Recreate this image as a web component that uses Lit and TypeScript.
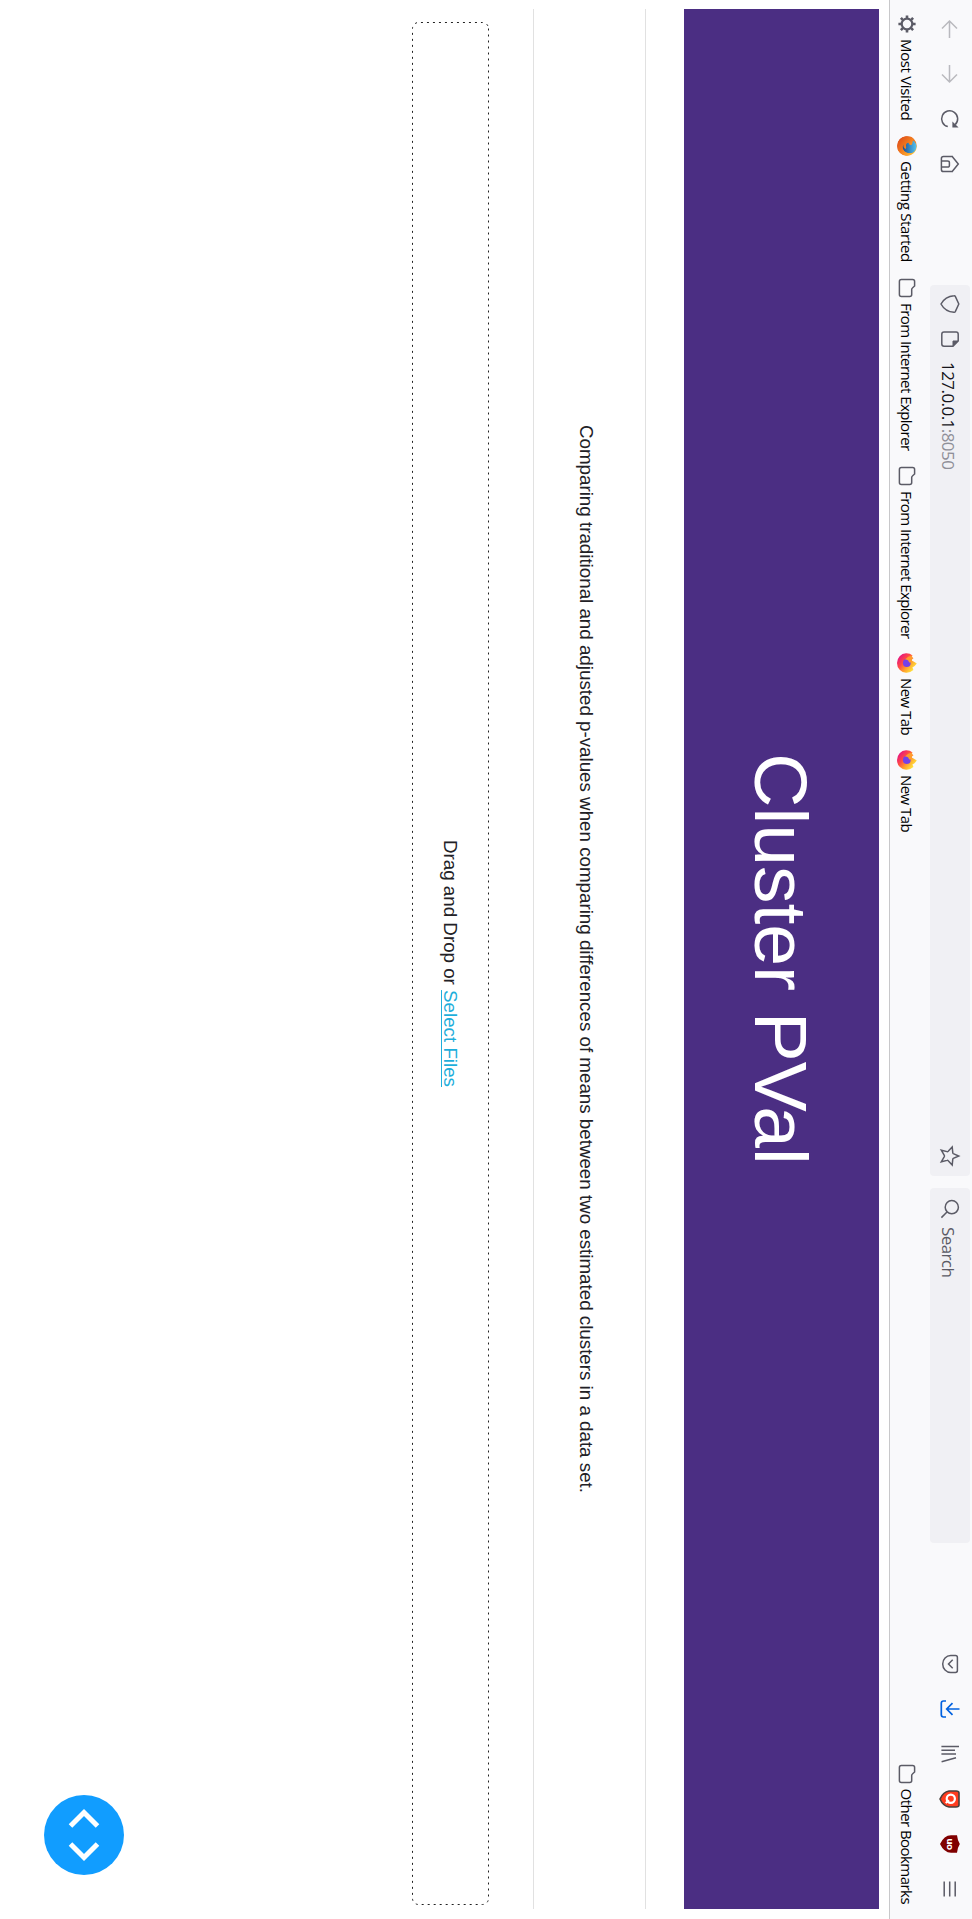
import { LitElement, html, css, svg } from "lit";
import { customElement } from "lit/decorators.js";

const icon = (w: number, h: number, body: unknown, cls = "") =>
  html`<svg class="icon ${cls}" width=${w} height=${h} viewBox="0 0 ${w} ${h}">${body}</svg>`;

const back = icon(20, 20, svg`<path d="M19 10.5H2M9.5 3L2 10.5L9.5 18"/>`, "dim");
const forward = icon(20, 20, svg`<path d="M1 10.5H18M10.5 3L18 10.5L10.5 18"/>`, "dim");
const reload = icon(20, 20, svg`<path d="M17.6 12.2A8 8 0 1 1 15.6 4.8"/><path class="solid" stroke="none" d="M18.6 1.4V7.6H12.4Z"/>`);
const home = icon(20, 20, svg`<path d="M2 8.2L10 1.7L18 8.2M2.4 8V16.5Q2.4 18.6 4.5 18.6H15.5Q17.6 18.6 17.6 16.5V8"/><path d="M7 18.5V12.5Q7 10.6 8.6 10.6H11.4Q13 10.6 13 12.5V18.5"/>`);
const shield = icon(20, 20, svg`<path d="M10 1.2L17.6 4.7Q18.4 5.1 18.3 6Q17.8 14.8 10 19Q2.2 14.8 1.7 6Q1.6 5.1 2.4 4.7Z"/>`);
const page = icon(18, 20, svg`<path d="M4.2 1.8H11L16.2 7V16Q16.2 18.2 14 18.2H4.2Q2 18.2 2 16V3.9Q2 1.8 4.2 1.8Z"/><path class="solid" stroke-width="1" d="M11 2V7H16Z"/>`);
const star = icon(22, 20, svg`<path d="M11 1.3L13.4 6.7Q13.6 7.1 14.2 7.2L20 7.8L15.7 11.8Q15.2 12.3 15.4 12.9L16.8 18.7L11.6 15.7Q11 15.4 10.4 15.7L5.2 18.7L6.6 12.9Q6.8 12.3 6.3 11.8L2 7.8L7.8 7.2Q8.4 7.1 8.6 6.7Z"/>`);
const magnifier = icon(20, 20, svg`<circle cx="8.2" cy="8.2" r="6.6"/><path d="M13 13L18.6 18.6"/>`);
const pocket = icon(20, 20, svg`<path d="M3.5 2.6H16.5Q18.4 2.6 18.4 4.5V9.3A8.4 8 0 0 1 1.6 9.3V4.5Q1.6 2.6 3.5 2.6Z"/><path d="M5.8 7.3L10 11.5L14.2 7.3"/>`);
const download = icon(20, 20, svg`<path d="M10 0.5V13M4.2 7.5L10 13.3L15.8 7.5M2 14V16.5Q2 18.7 4.2 18.7H15.8Q18 18.7 18 16.5V14"/>`, "blue");
const library = icon(20, 20, svg`<path d="M2.5 1V18.6M6.3 5V18.6M10.1 4V18.6M13.8 4L17.7 18.4"/>`);
const redShield = icon(20, 22, svg`<path d="M4 2H16Q18 2 18 5V12Q17 18 10 21Q3 18 2 12V5Q2 2 4 2Z" fill="#ff3d1f" stroke="#4a403c" stroke-width="1.6"/><circle cx="9.8" cy="10.2" r="4.1" stroke="#fff" stroke-width="2.2"/><path d="M11.2 12L14 15.3" stroke="#fff" stroke-width="2"/>`);
const darkShield = icon(20, 22, svg`<path d="M10 1.2Q13.5 3.4 18.8 4V10Q18.6 17 10 21Q1.4 17 1.2 10V4Q6.5 3.4 10 1.2Z" fill="#800000" stroke="none"/><text class="badge" x="10" y="14">uo</text>`);
const menu = icon(18, 20, svg`<path d="M1.5 4.8H16.5M1.5 10.3H16.5M1.5 15.8H16.5"/>`);

const gear = icon(20, 20, svg`<circle cx="10" cy="10" r="5.3" stroke-width="2.2"/><path stroke-width="2.6" d="M10 1.4V4M10 16V18.6M1.4 10H4M16 10H18.6M3.9 3.9L5.8 5.8M14.2 14.2L16.1 16.1M3.9 16.1L5.8 14.2M14.2 5.8L16.1 3.9"/>`);
const folder = icon(20, 20, svg`<path d="M3.4 2.4H8L10 4.6Q10.6 5.3 11.6 5.3H16.4Q18.4 5.3 18.4 7.3V15.6Q18.4 17.6 16.4 17.6H3.4Q1.4 17.6 1.4 15.6V4.4Q1.4 2.4 3.4 2.4Z"/>`);
const oldFox = icon(20, 20, svg`
  <defs><radialGradient id="o" cx=".75" cy=".2" r="1"><stop offset="0" stop-color="#ffcf3a"/><stop offset=".45" stop-color="#f58220"/><stop offset="1" stop-color="#cf3a16"/></radialGradient>
  <linearGradient id="b" x1="0" y1="0" x2="0" y2="1"><stop offset="0" stop-color="#55c3ee"/><stop offset="1" stop-color="#174a94"/></linearGradient>
  <linearGradient id="f" x1="1" y1="0" x2="0" y2="1"><stop offset="0" stop-color="#ffc83a"/><stop offset=".5" stop-color="#f27a1e"/><stop offset="1" stop-color="#d9431a"/></linearGradient></defs>
  <circle cx="10" cy="10" r="9.8" fill="url(#o)" stroke="none"/>
  <circle cx="10.5" cy="7.6" r="7" fill="url(#b)" stroke="none"/>
  <path d="M.8 6Q2 3.5 3.4 3.2Q5 4.6 7.2 4.6Q9.8 5.2 8.8 7.3L6.8 8.6Q7.2 11.2 10 11Q12 10.4 13 11.4Q11.6 14 8.4 13.6Q13.8 16.4 16.8 10Q17.8 7 17 4.2Q20 7 19.7 11Q18 19.6 10 19.8Q1.2 19.2 .3 11Z" fill="url(#f)" stroke="none"/>`);
const newFox = icon(20, 20, svg`
  <defs><linearGradient id="n" x1=".85" y1=".1" x2=".2" y2=".9"><stop offset="0" stop-color="#fff044"/><stop offset=".38" stop-color="#ffa22a"/><stop offset=".68" stop-color="#ff4a45"/><stop offset="1" stop-color="#e8187c"/></linearGradient></defs>
  <path d="M10.6.2Q13.4 2 14.4 4.6Q17.2 3.4 17 3.6Q20 7 19.7 11A9.7 9 0 0 1 .3 11Q.2 7 2.6 4.4L3.4 5.6L5.2 3.5Q5.8 5.3 7.6 5.3Q9 2.3 10.6.2Z" fill="url(#n)" stroke="none"/>
  <circle cx="10" cy="10.2" r="3.9" fill="#7540e8" stroke="none"/>
  <path d="M2.6 5Q8 4.2 9.8 6.6Q10 8 7.6 8.8Q6.2 10 6.4 12Q3.4 9 2.6 5Z" fill="#ff9a2d" stroke="none"/>`);

const navLeft = [back, forward, reload, home];
const navRight = [pocket, download, library, redShield, darkShield, menu];

const bookmarks = [
  { i: gear, w: 122, t: "Most Visited" },
  { i: oldFox, w: 142, t: "Getting Started" },
  { i: folder, w: 188, t: "From Internet Explorer" },
  { i: folder, w: 187, t: "From Internet Explorer" },
  { i: newFox, w: 97, t: "New Tab" },
  { i: newFox, w: 97, t: "New Tab" },
];

@customElement("app-root")
export class AppRoot extends LitElement {
  static styles = css`
    :host { display: block; width: 972px; height: 1919px; overflow: hidden; background: #fff; }
    .stage {
      width: 1919px; height: 972px; display: flex; flex-direction: column;
      transform-origin: 0 0; transform: translateX(972px) rotate(90deg);
      font-family: "Open Sans", "Noto Sans", sans-serif; color: #15141a; background: #fff;
      position: relative;
    }
    .icon { fill: none; stroke: #5b5b66; stroke-width: 1.5; flex: none; display: block; overflow: visible; }
    .icon .solid { fill: #5b5b66; }
    .icon.dim { stroke: #b9b9be; }
    .icon.blue { stroke: #0061e0; stroke-width: 1.7; }
    .badge { font: bold 9px "DejaVu Sans", sans-serif; fill: #fff; stroke: none; text-anchor: middle; letter-spacing: -0.6px; }
    .chrome { background: #f9f9fb; border-bottom: 1px solid #c8c8ca; height: 82px; flex: none; }
    .nav { height: 40px; padding-top: 2px; display: flex; align-items: center; }
    .slot { display: flex; justify-content: center; flex: none; width: 45px; }
    .left { display: flex; width: 279px; padding: 0 0 1px 6px; flex: none; }
    .field { background: #f0f0f4; border-radius: 4px; height: 40px; display: flex; align-items: center; box-sizing: border-box; flex: none; }
    .url { width: 891px; padding: 0 9px; }
    .url .page { margin-left: 16px; }
    .address { margin-left: 14px; padding-top: 4px; font-size: 17px; letter-spacing: -0.55px; line-height: 36px; flex: 1; white-space: nowrap; }
    .port { color: #8f8f98; }
    .search { width: 355px; margin-left: 12px; padding-left: 11px; font-size: 17px; letter-spacing: -0.6px; color: #5b5b66; }
    .search span { margin-left: 8px; padding-top: 4px; line-height: 36px; }
    .right { display: flex; margin-left: 98.5px; align-items: center; }
    .marks { height: 40px; padding: 3px 15px 0 14px; display: flex; align-items: center; }
    .mark { display: flex; align-items: center; flex: none; gap: 5px; font-size: 15px; letter-spacing: -0.55px; line-height: 36px; white-space: nowrap; color: #000; }
    .mark:first-child, .mark:nth-child(2) { letter-spacing: -0.35px; }
    .mark span { padding-bottom: 1px; }
    .other { margin-left: auto; }
    .page-body { font-family: "Liberation Sans", Arial, sans-serif; padding: 10px 10px 0 9px; font-size: 18.75px; line-height: 30px; color: #222126; }
    .banner { height: 195px; background: #4b2e83; color: #fff; display: flex; align-items: center; justify-content: center; font-size: 75px; line-height: 90px; margin: 0; font-weight: 400; }
    .rule { border: 0; border-top: 1px solid #e1e1e1; margin: 38px 0 0; }
    .intro { margin: 44px 0 0; height: 67px; text-align: center; }
    .intro + .rule { margin: 0; }
    .drop { margin: 44px 4px 0 13px; height: 77px; display: grid; place-items: center; }
    .drop > * { grid-area: 1 / 1; }
    .outline { width: 100%; height: 77px; display: block; fill: none; stroke: #222; stroke-dasharray: 2 4; }
    .link { color: #1eaedb; text-decoration: underline; text-decoration-thickness: 1px; text-underline-offset: 2px; }
    .debug { position: absolute; right: 44px; bottom: 44px; width: 80px; height: 80px; border-radius: 50%; background: #119dff; }
    .debug svg { display: block; fill: none; stroke: #fff; stroke-width: 5; }
  `;

  render() {
    return html`
      <div class="stage">
        <header class="chrome">
          <div class="nav">
            <div class="left">${navLeft.map((i) => html`<span class="slot">${i}</span>`)}</div>
            <div class="field url">
              ${shield}<span class="page">${page}</span>
              <span class="address">127.0.0.1<span class="port">:8050</span></span>
              ${star}
            </div>
            <div class="field search">${magnifier}<span>Search</span></div>
            <div class="right">${navRight.map((i) => html`<span class="slot">${i}</span>`)}</div>
          </div>
          <div class="marks">
            ${bookmarks.map((b) => html`<div class="mark" style="width:${b.w}px">${b.i}<span>${b.t}</span></div>`)}
            <div class="mark other">${folder}<span>Other Bookmarks</span></div>
          </div>
        </header>
        <main class="page-body">
          <h1 class="banner">Cluster PVal</h1>
          <hr class="rule" />
          <p class="intro">Comparing traditional and adjusted p-values when comparing differences of means between two estimated clusters in a data set.</p>
          <hr class="rule" />
          <div class="drop">
            <svg class="outline"><rect x="0.5" y="0.5" width="1882" height="76" rx="6" /></svg>
            <div>Drag and Drop or <a class="link">Select Files</a></div>
          </div>
        </main>
        <div class="debug">
          <svg width="80" height="80"><path d="M31 26.5L17.5 40L31 53.5M49 26.5L62.5 40L49 53.5" /></svg>
        </div>
      </div>
    `;
  }
}
